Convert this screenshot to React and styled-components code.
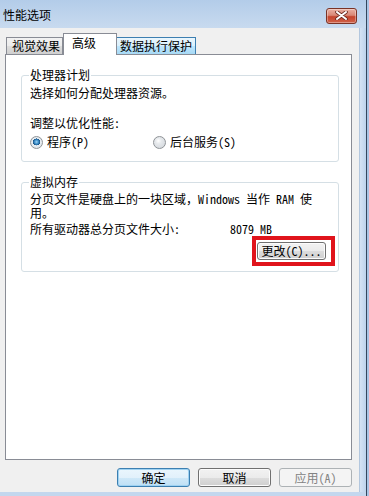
import styled, { createGlobalStyle } from "styled-components";

const GlobalStyle = createGlobalStyle`
  html, body {
    margin: 0;
    padding: 0;
  }
  body {
    background: #a9c4e4;
    font-family: "Noto Sans Mono CJK SC", "Noto Sans CJK SC", "Liberation Sans", sans-serif;
    font-size: 12px;
    color: #000;
  }
`;

export default function App() {
  return (
    <>
      <GlobalStyle />
      <Frame>
        <TitleBar>
          <Title>性能选项</Title>
          <CloseBtn>
            <svg width="13" height="9" viewBox="0 0 13 9">
              <path d="M2 1 L11 8 M11 1 L2 8" stroke="#6b2a20" strokeWidth="3.6" strokeLinecap="round" />
              <path d="M2 1 L11 8 M11 1 L2 8" stroke="#fff" strokeWidth="2" strokeLinecap="round" />
            </svg>
          </CloseBtn>
        </TitleBar>
        <Body>
          <Client>
            <TabStrip>
              <Tab $first $w={57}>视觉效果</Tab>
              <Tab $active $w={54}>高级</Tab>
              <Tab $hot $w={79}>数据执行保护</Tab>
            </TabStrip>
            <Panel>
              <Group>
                <Legend>处理器计划</Legend>
                <Line>选择如何分配处理器资源。</Line>
                <Line $top={16}>调整以优化性能:</Line>
                <RadioRow>
                  <RadioItem $w={123}>
                    <Radio $checked />
                    <span>程序(P)</span>
                  </RadioItem>
                  <RadioItem>
                    <Radio />
                    <span>后台服务(S)</span>
                  </RadioItem>
                </RadioRow>
              </Group>
              <Group $second>
                <Legend>虚拟内存</Legend>
                <Para>
                  分页文件是硬盘上的一块区域，Windows 当作 RAM 使
                  <br />
                  用。
                </Para>
                <SizeRow>
                  <SizeLabel>所有驱动器总分页文件大小:</SizeLabel>
                  <span>8079 MB</span>
                </SizeRow>
                <ButtonRow>
                  <Marked>
                    <Button $w={69} $h={18}>更改(C)...</Button>
                  </Marked>
                </ButtonRow>
              </Group>
            </Panel>
            <Footer>
              <Button $default>确定</Button>
              <Button>取消</Button>
              <Button $disabled>应用(A)</Button>
            </Footer>
          </Client>
          <SideFrame />
        </Body>
      </Frame>
    </>
  );
}

const Frame = styled.div`
  width: 366px;
  height: 496px;
  border-right: 1px solid #34465c;
  background: linear-gradient(180deg, #b7cfea 0%, #c9dbf0 40px, #c3d7ee 100%);
  display: flex;
  flex-direction: column;
  box-sizing: content-box;
`;

const TitleBar = styled.div`
  height: 28px;
  display: flex;
  align-items: center;
  justify-content: space-between;
  padding: 0 9px 0 3px;
  background: linear-gradient(180deg, #b3cce9 0%, #c8daef 100%);
`;

const Title = styled.div`
  font-size: 12px;
  line-height: 14px;
  margin-top: 2px;
  color: #000;
`;

const CloseBtn = styled.div`
  width: 29px;
  height: 14px;
  margin-top: 3px;
  border: 1px solid #7a3326;
  border-radius: 3px;
  background: linear-gradient(180deg, #eab1a3 0%, #d98775 45%, #c5442c 55%, #d0624a 100%);
  box-shadow: inset 0 0 0 1px rgba(255, 255, 255, 0.35);
  display: flex;
  align-items: center;
  justify-content: center;
`;

const Body = styled.div`
  flex: 1;
  display: flex;
  padding-bottom: 4px;
`;

const Client = styled.div`
  width: 359px;
  box-sizing: border-box;
  background: #f0f0f0;
  padding: 5px 7px 5px 5px;
  display: flex;
  flex-direction: column;
`;

const SideFrame = styled.div`
  flex: 1;
  border-left: 1px solid #b3c7de;
  background: linear-gradient(90deg, #d4e3f4, #bdd3ec);
`;

const TabStrip = styled.div`
  height: 21px;
  display: flex;
  align-items: flex-end;
  padding-left: 1px;
  position: relative;
  z-index: 1;
`;

const Tab = styled.div`
  box-sizing: border-box;
  width: ${(p) => p.$w}px;
  height: ${(p) => (p.$active ? "22px" : "17px")};
  margin-bottom: ${(p) => (p.$active ? "-1px" : "0")};
  border: 1px solid ${(p) => (p.$hot ? "#3c7fb1" : "#898c95")};
  border-bottom: 0;
  border-left-width: ${(p) => (p.$active || p.$first ? "1px" : "0")};
  background: ${(p) =>
    p.$active
      ? "#fff"
      : p.$hot
      ? "linear-gradient(180deg, #eaf6fd 0%, #d9f0fc 50%, #bee6fd 51%, #a7d9f5 100%)"
      : "linear-gradient(180deg, #f2f2f2 0%, #ebebeb 50%, #dddddd 51%, #cfcfcf 100%)"};
  font-size: 12px;
  line-height: ${(p) => (p.$active ? "18px" : "15px")};
  padding-left: ${(p) => (p.$active ? "8px" : p.$hot ? "3px" : "5px")};
  white-space: nowrap;
  overflow: hidden;
`;

const Panel = styled.div`
  flex: 1;
  background: #fff;
  border: 1px solid #898c95;
  padding: 13px 12px 0 15px;
  display: flex;
  flex-direction: column;
`;

const Group = styled.fieldset`
  margin: ${(p) => (p.$second ? "13px 0 0" : "0")};
  border: 1px solid #d5dfe5;
  border-radius: 3px;
  padding: ${(p) => (p.$second ? "3px 12px 11px 8px" : "4px 12px 12px 8px")};
  min-width: 0;
`;

const Legend = styled.legend`
  padding: 0 1px;
  margin-left: -1px;
  line-height: 14px;
  font-size: 12px;
`;

const Line = styled.div`
  line-height: 14px;
  margin-top: ${(p) => p.$top || 0}px;
  white-space: nowrap;
`;

const RadioRow = styled.div`
  display: flex;
  margin-top: 5px;
  height: 14px;
  align-items: center;
`;

const RadioItem = styled.label`
  display: flex;
  align-items: center;
  gap: 4px;
  width: ${(p) => (p.$w ? `${p.$w}px` : "auto")};
  line-height: 14px;
`;

const Radio = styled.span`
  width: 13px;
  height: 13px;
  box-sizing: border-box;
  border-radius: 50%;
  border: 1px solid #8f9397;
  background: ${(p) =>
    p.$checked
      ? "radial-gradient(circle at 50% 45%, #9fd3f3 0, #3b8ec9 2px, #1c5486 3.4px, #e9eef2 3.6px, #d5dde3 100%)"
      : "radial-gradient(circle at 40% 35%, #ffffff 0, #e6e9ec 3px, #cfd4d9 100%)"};
  flex: none;
`;

const Para = styled.div`
  line-height: 14px;
  white-space: nowrap;
`;

const SizeRow = styled.div`
  display: flex;
  line-height: 14px;
  margin-top: 2px;
`;

const SizeLabel = styled.span`
  width: 200px;
`;

const ButtonRow = styled.div`
  display: flex;
  justify-content: flex-end;
  margin-top: 6px;
`;

const Marked = styled.div`
  position: relative;
  display: flex;
  &::after {
    content: "";
    position: absolute;
    left: -5px;
    right: -9px;
    top: -6px;
    bottom: -6px;
    border: 4px solid #e0141c;
    pointer-events: none;
  }
`;

const Button = styled.div`
  box-sizing: border-box;
  width: ${(p) => p.$w || 73}px;
  height: ${(p) => p.$h || 19}px;
  border: 1px solid
    ${(p) => (p.$default ? "#3c7fb1" : p.$disabled ? "#adb2b5" : "#707070")};
  border-radius: 3px;
  background: ${(p) =>
    p.$disabled
      ? "#f4f4f4"
      : p.$default
      ? "linear-gradient(180deg, #eaf6fd 0%, #e2f1fb 50%, #cfe8f8 51%, #bfe0f5 100%)"
      : "linear-gradient(180deg, #f2f2f2 0%, #ebebeb 50%, #dddddd 51%, #cfcfcf 100%)"};
  box-shadow: ${(p) =>
    p.$default ? "inset 0 0 0 1px #9fd2f2" : p.$disabled ? "none" : "inset 0 0 0 1px #fcfcfc"};
  color: ${(p) => (p.$disabled ? "#838383" : "#000")};
  display: flex;
  align-items: center;
  justify-content: center;
  font-size: 12px;
  line-height: 14px;
  white-space: nowrap;
`;

const Footer = styled.div`
  display: flex;
  justify-content: flex-end;
  gap: 8px;
  margin-top: 8px;
`;
